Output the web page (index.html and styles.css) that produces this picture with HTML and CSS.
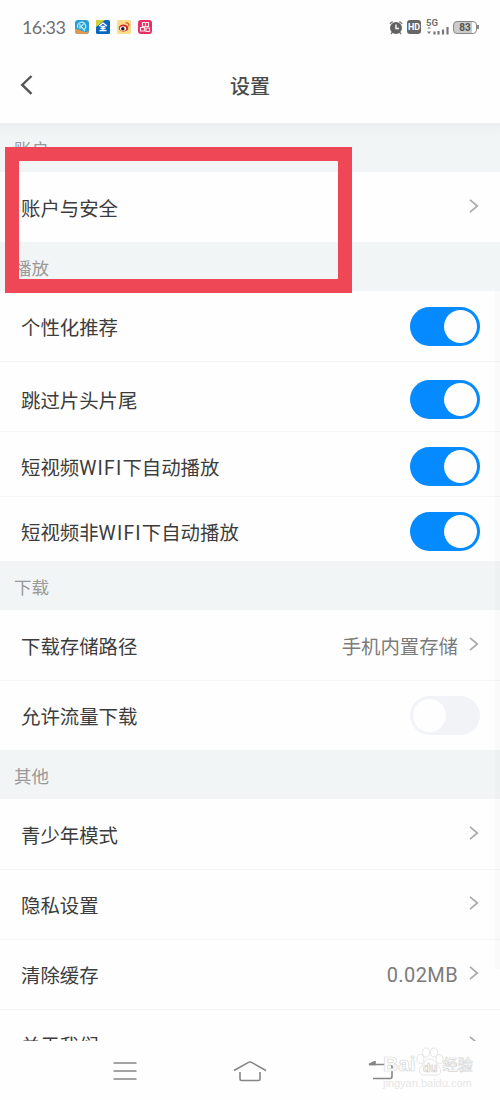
FILE: index.html
```html
<!DOCTYPE html>
<html lang="zh-CN">
<head>
<meta charset="utf-8">
<title>设置</title>
<link rel="stylesheet" href="styles.css">
</head>
<body>
<div class="phone">
  <div class="status">
    <span class="time">16:33</span>
    <div class="apps">
      <svg width="14" height="14" viewBox="0 0 14 14"><rect width="14" height="14" rx="3" fill="#2b9fd3"/><path d="M0 9q4 0 7 2t7 0v0q0 3-3 3H3q-3 0-3-3z" fill="#dc9b50"/><path d="M3 8a4 4 0 1 1 6 1.500M5 4v5M8.500 4 6 6.500 10 11" fill="none" stroke="#b5edff" stroke-width="1.200"/></svg>
      <svg width="14" height="14" viewBox="0 0 14 14"><rect width="14" height="14" rx="1.500" fill="#0868bd"/><path d="M0 0h9L0 7z" fill="#d5cf35"/><path d="m3 6 4-3 4 3M4.500 6.500h5M4.500 8.500h5M3.500 10.700h7M7 6.500v4" fill="none" stroke="#fff" stroke-width="1.300"/></svg>
      <svg width="14" height="14" viewBox="0 0 14 14"><rect width="14" height="14" rx="1.500" fill="#ffdc87"/><ellipse cx="6.500" cy="8" rx="4.800" ry="3.600" fill="#d32727"/><ellipse cx="6" cy="8.500" rx="3.200" ry="2.300" fill="#fff"/><circle cx="5.800" cy="8.700" r="1.800" fill="#222"/><path d="M8.500 3q4-.5 3.500 3.500" fill="none" stroke="#e45d25" stroke-width="1.300"/></svg>
      <svg width="14" height="14" viewBox="0 0 14 14"><rect width="14" height="14" rx="3" fill="#e52f62"/><path d="M4.500 2.500h6v4h-6zM7.500 2.500v4M2.500 7.500h4v3.500h-4zM8 8h3.500v3.500H8z" fill="none" stroke="#ffe0e8" stroke-width="1.200"/></svg>
    </div>
    <div class="signals">
      <svg class="alarm" width="14" height="15" viewBox="0 0 14 15"><circle cx="7" cy="8" r="6" fill="#626262"/><path d="M.8 3.800 3.600 1.500M13.200 3.800 10.400 1.500M3 12.500l-1 1.500M11 12.500l1 1.500" stroke="#777" stroke-width="1.400"/><path d="M7 4.500v4h3" fill="none" stroke="#fff" stroke-width="1.400"/></svg>
      <span class="hd">HD</span>
      <div class="net"><span>5G</span><svg width="23" height="8" viewBox="0 0 23 8"><path d="M1 1.500 3 0l2 1.500zM1 4.500h4L3 7z" fill="#777"/><path d="M8.500 7.500v-3M12.500 7.500V4M17 7.500V2.500M21.500 7.500V0" stroke="#777" stroke-width="2.200"/></svg></div>
      <div class="battery"><span>83</span></div>
    </div>
  </div>
  <header class="header">
    <svg class="back" width="13" height="20" viewBox="0 0 13 20"><path d="M11.500 1 2.200 9.900l9.300 8.900" fill="none" stroke="#555" stroke-width="2.400"/></svg>
    <h1>设置</h1>
  </header>
  <main class="list">
    <div class="section first">账户</div>
    <div class="row account"><span>账户与安全</span><svg class="arrow" viewBox="0 0 10 14"><path d="m1 .8 7.300 6.200L1 13.200"/></svg></div>
    <div class="section">播放</div>
    <div class="row"><span>个性化推荐</span><i class="switch on"></i></div>
    <div class="row low"><span>跳过片头片尾</span><i class="switch on"></i></div>
    <div class="row short"><span>短视频<span class="latin">WIFI</span>下自动播放</span><i class="switch on"></i></div>
    <div class="row short"><span>短视频非<span class="latin">WIFI</span>下自动播放</span><i class="switch on"></i></div>
    <div class="section">下载</div>
    <div class="row"><span>下载存储路径</span><span class="value">手机内置存储</span><svg class="arrow" viewBox="0 0 10 14"><path d="m1 .8 7.300 6.200L1 13.200"/></svg></div>
    <div class="row"><span>允许流量下载</span><i class="switch"></i></div>
    <div class="section">其他</div>
    <div class="row"><span>青少年模式</span><svg class="arrow" viewBox="0 0 10 14"><path d="m1 .8 7.300 6.200L1 13.200"/></svg></div>
    <div class="row"><span>隐私设置</span><svg class="arrow" viewBox="0 0 10 14"><path d="m1 .8 7.300 6.200L1 13.200"/></svg></div>
    <div class="row"><span>清除缓存</span><span class="value size">0.02MB</span><svg class="arrow" viewBox="0 0 10 14"><path d="m1 .8 7.300 6.200L1 13.200"/></svg></div>
    <div class="row"><span>关于我们</span><svg class="arrow" viewBox="0 0 10 14"><path d="m1 .8 7.300 6.200L1 13.200"/></svg></div>
  </main>
  <nav class="nav">
    <svg width="24" height="20" viewBox="0 0 24 20"><path d="M.5 2h23M.5 10h23M.5 18h23"/></svg>
    <svg class="home" width="34" height="22" viewBox="0 0 34 22"><path d="M1 10.500 15.500 2.400q1.500-.8 3 0L33 10.500M7 12v7q0 1.500 1.500 1.500h17q1.500 0 1.500-1.500v-7"/></svg>
    <svg width="26" height="20" viewBox="0 0 26 20"><path d="M1 3.500h21q2 0 2 2v10q0 2-2 2H5"/><path class="head" d="m1 3.500 6-3v3z"/></svg>
  </nav>
  <div class="scrollbar"></div>
  <div class="highlight"></div>
  <div class="watermark">
    <div class="mark"><span>Bai</span><svg width="28" height="29" viewBox="0 0 28 29"><ellipse cx="4.500" cy="12" rx="3.500" ry="4.500"/><ellipse cx="10" cy="5.500" rx="3.500" ry="4.500"/><ellipse cx="18" cy="5.500" rx="3.500" ry="4.500"/><ellipse cx="23.500" cy="12" rx="3.500" ry="4.500"/><path d="M14 12c-5 0-6 5-9 8s-2 8 3 8h12c5 0 6-5 3-8s-4-8-9-8z"/><text x="14" y="25" text-anchor="middle">du</text></svg><span class="cn">经验</span></div>
    <div class="url">jingyan.baidu.com</div>
  </div>
</div>
</body>
</html>
```

FILE: styles.css
```css
* { box-sizing: border-box; }
body { margin: 0; background: #fefefe; font-family: Roboto, "Noto Sans CJK SC", sans-serif; }
.phone { position: relative; display: flex; flex-direction: column; width: 500px; height: 1100px; overflow: hidden; background: #fefefe; }
.status { display: flex; align-items: center; height: 54px; padding: 0 22px 0 22px; color: #707070; }
.time { width: 53px; font: 18px/22px Lato, sans-serif; letter-spacing: -.6px; white-space: nowrap; }
.apps { display: flex; gap: 7px; }
.apps svg { display: block; }
.signals { display: flex; align-items: center; margin: 0 1px 0 auto; }
.hd { width: 14px; height: 14px; margin: 0 5px 0 4px; border-radius: 3px; background: #666; color: #fff; font: bold 9px/14px Roboto, sans-serif; text-align: center; }
.net { display: flex; flex-direction: column; width: 23px; height: 15px; margin-right: 4px; }
.net span { height: 7px; font: bold 9.500px/6px Roboto, sans-serif; }
.battery { position: relative; display: flex; align-items: center; justify-content: center; width: 24px; height: 13px; border: 1.500px solid #888; border-radius: 4px; background: linear-gradient(90deg, #ccc 80%, #fff 80%); font: bold 10px/10px Roboto, sans-serif; color: #555; }
.battery span { padding-top: 1px; }
.battery::after { content: ""; position: absolute; right: -3px; top: 3px; width: 2px; height: 4px; background: #888; }
.header { display: flex; align-items: center; height: 69px; padding: 0 20px 6px; }
.back { display: block; width: 13px; margin-top: -2px; }
.header h1 { flex: 1; margin: 0 13px 0 0; padding-top: 3px; text-align: center; color: #4a4a4a; font-size: 20px; font-weight: 500; line-height: 28px; }
.list { height: 918px; overflow: hidden; flex: none; }
.section { display: flex; align-items: center; height: 49px; padding: 4px 14px 0; background: #f2f5f6; color: #999; font-size: 17.500px; line-height: 26px; }
.section.first { background: linear-gradient(#eceeef, #f2f5f6 12px); }
.row { display: flex; align-items: center; height: 70px; padding: 1px 21px; color: #3c3c3c; font-size: 19.400px; line-height: 28px; white-space: nowrap; }
.row + .row { padding-top: 0; border-top: 1px solid #f5f5f6; }
.row > span { padding-top: 5px; }
.row + .row.low { padding-top: 6px; }
.row.short { height: 65px; }
.row + .row.short { padding-top: 6px; }
.latin { letter-spacing: 1.200px; }
.value { margin-left: auto; color: #7b7b7b; }
.row > .value.size { padding-top: 2px; font-size: 20px; letter-spacing: .4px; }
.arrow { width: 10px; height: 14px; margin: 0 0 2px auto; fill: none; stroke: #aaa; stroke-width: 1.700; }
.value + .arrow { margin-left: 11px; }
.switch { display: flex; align-items: center; width: 69.500px; height: 39px; margin: 0 -.5px 0 auto; padding: 3px; border-radius: 20px; background: #f2f3f7; }
.switch::before { content: ""; width: 33px; height: 33px; border-radius: 50%; background: #fefefe; }
.switch.on { justify-content: flex-end; background: #058aff; }
.nav { display: flex; justify-content: space-between; align-items: center; height: 59px; padding: 0 106px 0 113px; }
.nav svg { fill: none; stroke: #858585; stroke-width: 1.600; }
.nav .home { margin: 0 2.500px 0 -2.500px; }
.nav .head { fill: #858585; }
.scrollbar { position: absolute; top: 291px; right: 0; width: 5px; height: 678px; background: rgba(0, 0, 0, .015); }
.highlight { position: absolute; left: 5px; top: 147px; width: 347px; height: 146px; border: 14px solid #ef4756; }
.watermark { position: absolute; left: 383px; top: 1046px; width: 92px; color: #fff; }
.mark { display: flex; align-items: flex-end; height: 30px; font: bold 21px/24px "Liberation Sans", sans-serif; -webkit-text-stroke: .7px #d8d8d8; }
.mark svg { flex: none; fill: #fff; stroke: #dedede; stroke-width: .8; }
.mark text { font-size: 12px; fill: #fff; stroke: #d0d0d0; stroke-width: .7; }
.cn { margin-left: -1px; font: 500 15px/24px "Noto Sans CJK SC", sans-serif; }
.url { margin-top: 1px; color: #e6e6e6; font: 11px/12px "Liberation Sans", sans-serif; white-space: nowrap; }
```
